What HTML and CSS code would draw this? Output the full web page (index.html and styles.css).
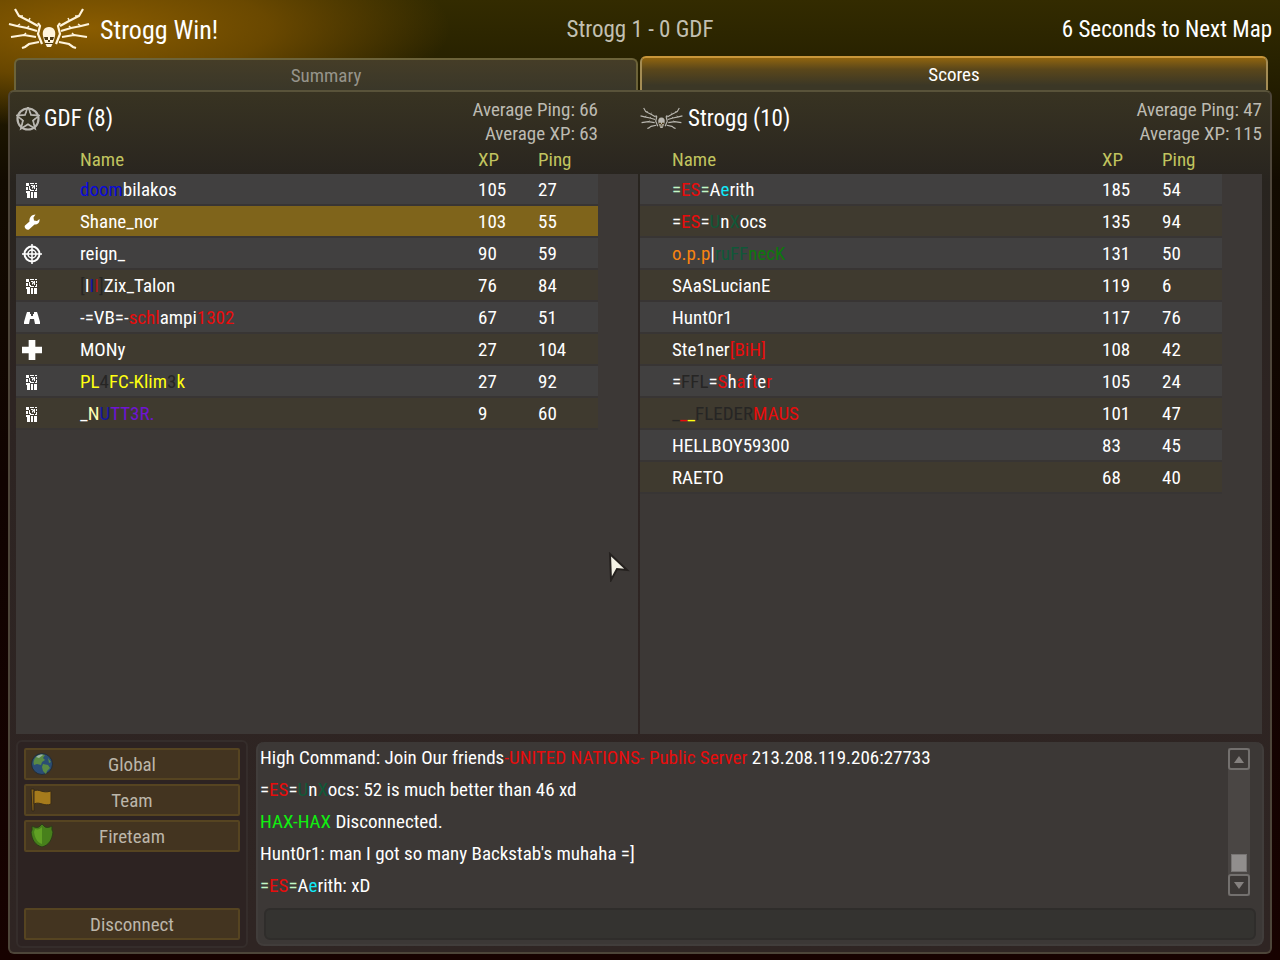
FILE: index.html
```html
<!DOCTYPE html>
<html lang="en">
<head>
    <meta charset="UTF-8" />
    <meta name="viewport" content="width=device-width, initial-scale=1.0" />
    <title>Scores</title>
    <link rel="stylesheet" href="styles.css">
</head>
<body>
    <!-- Shared icons -->
    <svg class="sprites" aria-hidden="true">
        <g id="wing">
            <path d="M7 3 11 10 21 15 30 20M1 18 9 20 19 22 29 25M3 31 16 29 28 31M14 42 17 41 21 38 31 36" fill="none" stroke="currentColor" stroke-width="2.200" />
            <path d="M11 10 15 10M9 20 12 18M21 14 22 12M19 22 21 20M16 29 18 27" fill="none" stroke="currentColor" stroke-width="1.500" />
            <path d="M30 17 32 20 30 28 34 38" fill="none" stroke="currentColor" stroke-width="2.200" />
        </g>
        <symbol id="icon-strogg" viewBox="0 2 84 44">
            <use href="#wing" />
            <use href="#wing" transform="translate(82 0) scale(-1 1)" />
            <path d="M41 21c-5 0-7 4-6 9l1 4 1 3 2 4h4l2-4 1-3 1-4c1-5-1-9-6-9z" fill="currentColor" />
            <path d="M36 31h4v3h-3zM42 31h4l-1 3h-3zM40 34h2v2h-2zM37 37h8v1h-8z" fill="#4a3812" />
        </symbol>
        <symbol id="icon-gdf" viewBox="0 0 24 24">
            <circle cx="12" cy="12" r="10.500" fill="none" stroke="currentColor" stroke-width="2.200" />
            <path d="M12 0 15 8 23 8.500 17 13.500 19 21.500 12 17.200 5 21.500 7 13.500 1 8.500 9 8z" fill="#33301f" stroke="currentColor" stroke-width="1.800" />
            <path d="M12 2 14 9.500 21 9.500 15.500 13 17.500 19.500 12 15.500 6.500 19.500 8.500 13 3 9.500 10 9.500z" fill="#33301f" />
        </symbol>
        <symbol id="icon-soldier" viewBox="0 0 12 16">
            <path d="M0 1h3v3H0zM4 1h4v1H4zM9 1h2v1H9zM0 5h2v3H0zM3 4h1v3h1v1H3zM5 3h2v1H5zM6 5l2-2v2L6 7zM8 3h1v4H8zM4 8h4v1H4zM10 3h1v2h-1zM10 6h1v2h-1zM9 8h2v1H9zM0 9h4v7H1V11H0zM5 10h2v6H5zM8 10h3v6H8z" fill="currentColor" />
        </symbol>
        <symbol id="icon-engineer" viewBox="0 0 16 16">
            <path d="M15.500 5c.5 3.500-2 6-5 5.500L5 15.500C3 17-.5 13.500 1 11.500l4.500-4C5 4 7.500.5 11.500.5L9.500 3.500 10 6.500 13 7z" fill="currentColor" />
        </symbol>
        <symbol id="icon-covert" viewBox="0 0 20 20">
            <circle cx="10" cy="10" r="7.500" fill="none" stroke="currentColor" stroke-width="2" />
            <circle cx="10" cy="10" r="4" fill="none" stroke="currentColor" stroke-width="1.500" />
            <path d="M10 0v20M0 10h20" stroke="currentColor" stroke-width="1.500" />
        </symbol>
        <symbol id="icon-recon" viewBox="0 0 16 14">
            <path d="M3 1h3v2h4V1h3l1 3 2 7v2h-5l-1-5H6l-1 5H0v-2l2-7z" fill="currentColor" />
            <path d="M7 3h2v2H7z" fill="#414040" />
        </symbol>
        <symbol id="icon-medic" viewBox="0 0 18 18">
            <path d="M6 0h6v6h6v6h-6v6H6v-6H0V6h6z" fill="currentColor" />
        </symbol>
    </svg>

    <header>
        <h1><svg class="emblem"><use href="#icon-strogg" /></svg>Strogg Win!</h1>
        <div class="result">Strogg 1 - 0 GDF</div>
        <div class="countdown">6 Seconds to Next Map</div>
    </header>

    <nav>
        <button type="button" class="tab">Summary</button>
        <button type="button" class="tab active">Scores</button>
    </nav>

    <main>
        <div class="teams">
            <section class="team gdf">
                <div class="team-header">
                    <h2><svg class="gdf-logo"><use href="#icon-gdf" /></svg>GDF (8)</h2>
                    <p>Average Ping: 66<br>Average XP: 63</p>
                </div>
                <div class="list">
                    <table>
                        <thead>
                            <tr><th class="class"></th><th>Name</th><th class="num">XP</th><th class="num">Ping</th></tr>
                        </thead>
                        <tbody>
                            <tr><td><svg class="soldier"><use href="#icon-soldier" /></svg></td><td><span class="blue">doom</span>bilakos</td><td>105</td><td>27</td></tr>
                            <tr class="me"><td><svg><use href="#icon-engineer" /></svg></td><td>Shane_nor</td><td>103</td><td>55</td></tr>
                            <tr><td><svg class="big"><use href="#icon-covert" /></svg></td><td>reign_</td><td>90</td><td>59</td></tr>
                            <tr><td><svg class="soldier"><use href="#icon-soldier" /></svg></td><td><span class="black">[</span>I<span class="navy">I</span><span class="darkred">I</span><span class="black">]</span>Zix_Talon</td><td>76</td><td>84</td></tr>
                            <tr><td><svg><use href="#icon-recon" /></svg></td><td>-=VB=-<span class="red">schl</span>ampi<span class="red">1302</span></td><td>67</td><td>51</td></tr>
                            <tr><td><svg class="big"><use href="#icon-medic" /></svg></td><td>MONy</td><td>27</td><td>104</td></tr>
                            <tr><td><svg class="soldier"><use href="#icon-soldier" /></svg></td><td><span class="yellow">PL</span><span class="black">4</span><span class="yellow">FC-Klim</span><span class="black">3</span><span class="yellow">k</span></td><td>27</td><td>92</td></tr>
                            <tr><td><svg class="soldier"><use href="#icon-soldier" /></svg></td><td>_<span class="cream">N</span><span class="navy">U</span><span class="purple">TT3R.</span></td><td>9</td><td>60</td></tr>
                        </tbody>
                    </table>
                </div>
            </section>

            <section class="team strogg">
                <div class="team-header">
                    <h2><svg class="strogg-logo"><use href="#icon-strogg" /></svg>Strogg (10)</h2>
                    <p>Average Ping: 47<br>Average XP: 115</p>
                </div>
                <div class="list">
                    <table>
                        <thead>
                            <tr><th class="class"></th><th>Name</th><th class="num">XP</th><th class="num">Ping</th></tr>
                        </thead>
                        <tbody>
                            <tr><td></td><td><span class="mint">=</span><span class="red">ES</span><span class="mint">=</span>A<span class="cyan">e</span>rith</td><td>185</td><td>54</td></tr>
                            <tr><td></td><td>=<span class="red">ES</span>=<span class="forest">U</span>n<span class="forest">X</span>ocs</td><td>135</td><td>94</td></tr>
                            <tr><td></td><td><span class="orange">o.p.p</span>|<span class="forest">ruFF</span><span class="green">necK</span></td><td>131</td><td>50</td></tr>
                            <tr><td></td><td>SAaSLucianE</td><td>119</td><td>6</td></tr>
                            <tr><td></td><td>Hunt0r1</td><td>117</td><td>76</td></tr>
                            <tr><td></td><td>Ste1ner<span class="red">[BiH]</span></td><td>108</td><td>42</td></tr>
                            <tr><td></td><td>=<span class="black">FFL</span>=<span class="red">S</span>h<span class="red">a</span>f<span class="red">t</span>e<span class="red">r</span></td><td>105</td><td>24</td></tr>
                            <tr><td></td><td><span class="black">_</span><span class="red">_</span><span class="yellow">_</span><span class="black">FLEDER</span><span class="red">MAUS</span></td><td>101</td><td>47</td></tr>
                            <tr><td></td><td>HELLBOY59300</td><td>83</td><td>45</td></tr>
                            <tr><td></td><td>RAETO</td><td>68</td><td>40</td></tr>
                        </tbody>
                    </table>
                </div>
            </section>
        </div>

        <div class="bottom">
            <div class="menu">
                <button type="button">
                    <svg viewBox="0 0 24 24">
                        <circle cx="12" cy="12" r="10.500" fill="#2b4d74" stroke="#252d33" />
                        <path d="M5 6c3-4 8-4 10-3l-2 3 2 2-3 2-1 3-4-1-3 1c-1-3 0-5 1-7zM13 12l5 1 2 3-3 3-1 3-3-3-1-4zM18 6l3 4-2 1z" fill="#5a8a43" />
                        <path d="M6 5c2-2 5-3 7-2l-4 3z" fill="#9ab2a0" />
                    </svg>
                    Global
                </button>
                <button type="button">
                    <svg viewBox="0 0 24 24">
                        <path d="M1 1h3v22H2z" fill="#8a6417" stroke="#33291a" />
                        <path d="M4 3c5-3 8 3 17 0v13c-7 3-11-3-17 0z" fill="#a67b1c" stroke="#3a2d18" />
                    </svg>
                    Team
                </button>
                <button type="button">
                    <svg viewBox="0 0 24 24">
                        <path d="M12 0 15 3c3 1 5 0 7-1v4l1 2c-1 8-4 13-11 15C5 21 2 16 1 8l1-2V2c2 1 4 2 7 1z" fill="#47801b" stroke="#2d3d18" />
                        <path d="M12 3v17c-5-2-7-6-8-12l1-3c3 1 5 0 7-2z" fill="#60a024" />
                    </svg>
                    Fireteam
                </button>
                <button type="button" class="disconnect">Disconnect</button>
            </div>

            <div class="chat">
                <div class="log">
                    <ul>
                        <li>High Command: Join Our friends<span class="red">-UNITED NATIONS- Public Server</span> 213.208.119.206:27733</li>
                        <li>=<span class="red">ES</span>=<span class="forest">U</span>n<span class="forest">X</span>ocs: 52 is much better than 46 xd</li>
                        <li><span class="lime">HAX-HAX</span> Disconnected.</li>
                        <li>Hunt0r1: man I got so many Backstab's muhaha =]</li>
                        <li><span class="mint">=</span><span class="red">ES</span><span class="mint">=</span>A<span class="cyan">e</span>rith: xD</li>
                    </ul>
                    <div class="scrollbar">
                        <button type="button" aria-label="Scroll up"><svg viewBox="0 0 10 7"><path d="M5 0 10 7H0z" fill="currentColor" /></svg></button>
                        <div class="track"><div class="thumb"></div></div>
                        <button type="button" aria-label="Scroll down"><svg viewBox="0 0 10 7"><path d="M0 0h10L5 7z" fill="currentColor" /></svg></button>
                    </div>
                </div>
                <input type="text" aria-label="Chat message">
            </div>
        </div>
    </main>

    <svg class="cursor" viewBox="0 0 22 30" aria-hidden="true">
        <path d="M2 2 19 18 9 17 3 28z" fill="#f4f2e6" stroke="#25211f" stroke-width="2" />
    </svg>
</body>
</html>
```
FILE: styles.css
```css
/* Basic reset */
* {
    margin: 0;
    padding: 0;
    box-sizing: border-box;
}

body {
    display: flex;
    flex-direction: column;
    min-height: 100vh;
    position: relative;
    padding: 0 8px 6px;
    font-family: "Roboto Condensed", "Liberation Sans Narrow", "Liberation Sans", sans-serif;
    font-size: 19px;
    line-height: 24px;
    color: #fff;
    background:
        radial-gradient(ellipse 360px 100px at 90px 28px, #8a5c00, rgba(120, 80, 0, 0.8) 50%, transparent),
        linear-gradient(#332b00, #282200 60px, #120b00 180px, #100300 50%, #170200);
}

button,
input {
    font: inherit;
    color: inherit;
}

.sprites {
    position: absolute;
    width: 0;
    height: 0;
}

/* Header */
header {
    display: grid;
    grid-template-columns: 1fr auto 1fr;
    align-items: center;
    height: 56px;
    padding-top: 4px;
    font-size: 23px;
}

h1,
h2 {
    display: flex;
    align-items: center;
    font-size: 23px;
    font-weight: normal;
}

h1 {
    font-size: 26px;
}

.emblem {
    width: 84px;
    height: 44px;
    margin-right: 8px;
    color: #fff4dc;
}

.result {
    color: #c2c0b2;
}

.countdown {
    text-align: right;
}

/* Tabs */
nav {
    display: grid;
    grid-template-columns: 1fr 1fr;
    align-items: end;
    padding: 0 4px;
}

.tab {
    height: 32px;
    margin: 0 2px;
    padding-top: 2px;
    border: 2px solid #6c6339;
    border-bottom: 0;
    border-radius: 6px 6px 0 0;
    background: linear-gradient(#453d27, #3a3729);
    color: #96948b;
}

.tab.active {
    height: 34px;
    margin: 0;
    border-color: #c8963a #a48c54;
    background: linear-gradient(#8f640f, #5b471a 35%, #3b3726 85%);
    color: #fff;
}

/* Main panel */
main {
    flex: 1;
    display: flex;
    flex-direction: column;
    gap: 6px;
    padding: 6px 6px 4px;
    border: 2px solid #4d4539;
    border-top-color: #59533a;
    border-radius: 6px;
    background: linear-gradient(#383322, #28241f 90px, #2d2422 300px, #2f2523);
}

.teams {
    flex: 1;
    display: grid;
    grid-template-columns: 1fr 1fr;
    gap: 2px;
    margin-right: 2px;
}

.team {
    display: flex;
    flex-direction: column;
}

.team-header {
    display: flex;
    justify-content: space-between;
    height: 48px;
}

.team-header h2 {
    height: 42px;
}

.gdf .team-header {
    padding-right: 40px;
}

.team-header p {
    color: #bdbbb2;
    text-align: right;
}

.gdf-logo {
    width: 24px;
    height: 24px;
    margin-right: 4px;
    color: #b9b7b0;
}

.strogg-logo {
    width: 44px;
    height: 24px;
    margin-right: 4px;
    color: #b9b7b0;
}

/* Player lists */
.list {
    flex: 1;
    padding-right: 40px;
    background: linear-gradient(transparent 28px, #3c3836 28px);
}

table {
    width: 100%;
    table-layout: fixed;
    border-collapse: separate;
    border-spacing: 0;
}

th {
    height: 28px;
    font-weight: normal;
    text-align: left;
    color: #c1c45f;
}

.class {
    width: 64px;
}

.strogg .class {
    width: 32px;
}

.num {
    width: 60px;
}

td {
    height: 32px;
    padding-top: 2px;
    border-bottom: 2px solid #383534;
    white-space: nowrap;
}

tbody tr {
    background: #414040;
}

tbody tr:nth-child(even) {
    background: #3f3a2f;
}

tbody tr.me {
    background: #7f641b;
}

td svg {
    display: block;
    width: 16px;
    height: 16px;
    margin-left: 8px;
}

td .soldier {
    width: 12px;
    margin-left: 10px;
}

td .big {
    width: 20px;
    height: 20px;
    margin-left: 6px;
}

/* Bottom bar */
.bottom {
    display: flex;
    gap: 8px;
    height: 208px;
}

.menu {
    display: flex;
    flex-direction: column;
    gap: 4px;
    width: 232px;
    padding: 6px;
    border: 2px solid #352d2b;
    border-radius: 6px;
    background: #2d2322;
}

.menu button {
    position: relative;
    height: 32px;
    padding-top: 2px;
    border: 2px solid #564421;
    border-radius: 2px;
    background: #433420;
    color: #bcb6aa;
}

.menu svg {
    position: absolute;
    left: 4px;
    top: 2px;
    width: 24px;
    height: 24px;
}

.menu .disconnect {
    margin-top: auto;
}

.chat {
    flex: 1;
    display: flex;
    flex-direction: column;
    justify-content: space-between;
    margin: 2px 0;
    padding: 0 6px 4px;
    border: 2px solid #413d3b;
    border-top: 0;
    border-radius: 8px;
    background: #3c3836;
}

.log {
    display: flex;
    justify-content: space-between;
    margin: 0 6px 0 -4px;
}

.log ul {
    list-style: none;
}

.log li {
    line-height: 32px;
}

.scrollbar {
    display: flex;
    flex-direction: column;
    width: 22px;
    margin: 6px 0;
    background: #4a4644;
}

.scrollbar button {
    display: flex;
    align-items: center;
    justify-content: center;
    height: 22px;
    border: 2px solid #73706e;
    border-radius: 3px;
    background: #3c3836;
    color: #85817f;
}

.scrollbar svg {
    width: 10px;
    height: 7px;
}

.track {
    flex: 1;
    display: flex;
    flex-direction: column;
    justify-content: end;
    padding: 2px 3px;
}

.thumb {
    height: 18px;
    background: #918e8d;
    border: 1px solid #777473;
}

.chat input {
    width: 100%;
    height: 32px;
    padding: 0 6px;
    border: 2px solid #2f2d2b;
    border-radius: 6px;
    background: #343330;
}

.cursor {
    position: absolute;
    left: 608px;
    top: 552px;
    width: 22px;
    height: 30px;
}

/* Name colours */
.red { color: #e80c0c; }
.darkred { color: #b01818; }
.blue { color: #0a0ad8; }
.navy { color: #1414a0; }
.black { color: #262524; }
.yellow { color: #ffff10; }
.cream { color: #ffffb4; }
.purple { color: #7014d4; }
.mint { color: #c4f8c8; }
.cyan { color: #10e8f8; }
.forest { color: #105838; }
.orange { color: #f88410; }
.green { color: #0c780c; }
.lime { color: #10f010; }
```
